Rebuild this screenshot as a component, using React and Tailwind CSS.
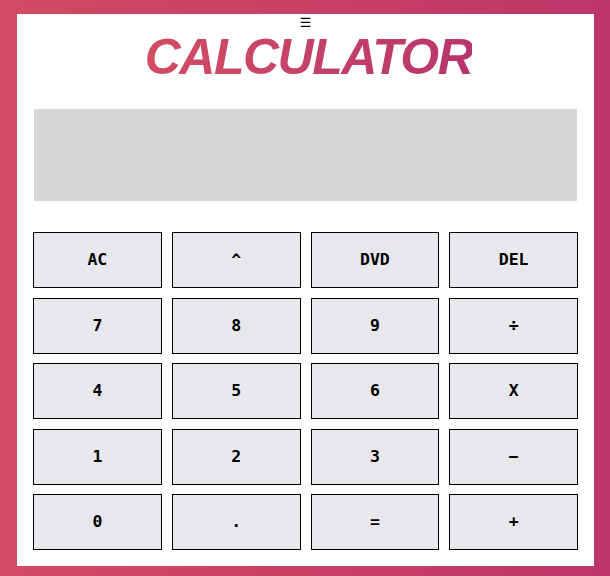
import React from "react";

const KEYS = [
  "AC", "^", "DVD", "DEL",
  "7", "8", "9", "÷",
  "4", "5", "6", "X",
  "1", "2", "3", "−",
  "0", ".", "=", "+",
];

export default function App() {
  return (
    <div className="h-[576px] w-[610px] bg-gradient-to-r from-[#d34a63] to-[#bc3669] pl-[17px] pr-[16px] pt-[14px] pb-[10px]">
      <div className="h-[552px] bg-white px-[16px]">
        {/* header */}
        <div className="flex flex-col items-center">
          <div className="mt-[2px] h-[14px] text-[13px] leading-[14px] text-black font-['DejaVu_Sans',sans-serif]">☰</div>
          <h1 className="ml-[6px] mt-[5px] h-[45px] bg-gradient-to-r from-[#d34c63] to-[#b8356b] bg-clip-text text-[50px] leading-[45px] font-bold italic tracking-[-1.5px] text-transparent font-['Liberation_Sans',Arial,sans-serif]">
            CALCULATOR
          </h1>
        </div>

        {/* display */}
        <div className="mx-[1px] mt-[29px] h-[92px] bg-[#d6d6d6]" />

        {/* keypad */}
        <div className="mt-[31px] grid grid-cols-4 gap-x-[10px] gap-y-[9.5px]">
          {KEYS.map((k) => (
            <button
              key={k}
              type="button"
              className="flex h-[56px] items-center justify-center border border-black bg-[#e8e8ec] pt-[1px] text-[16.5px] font-bold text-black font-['DejaVu_Sans_Mono',monospace]"
            >
              {k}
            </button>
          ))}
        </div>
      </div>
    </div>
  );
}
